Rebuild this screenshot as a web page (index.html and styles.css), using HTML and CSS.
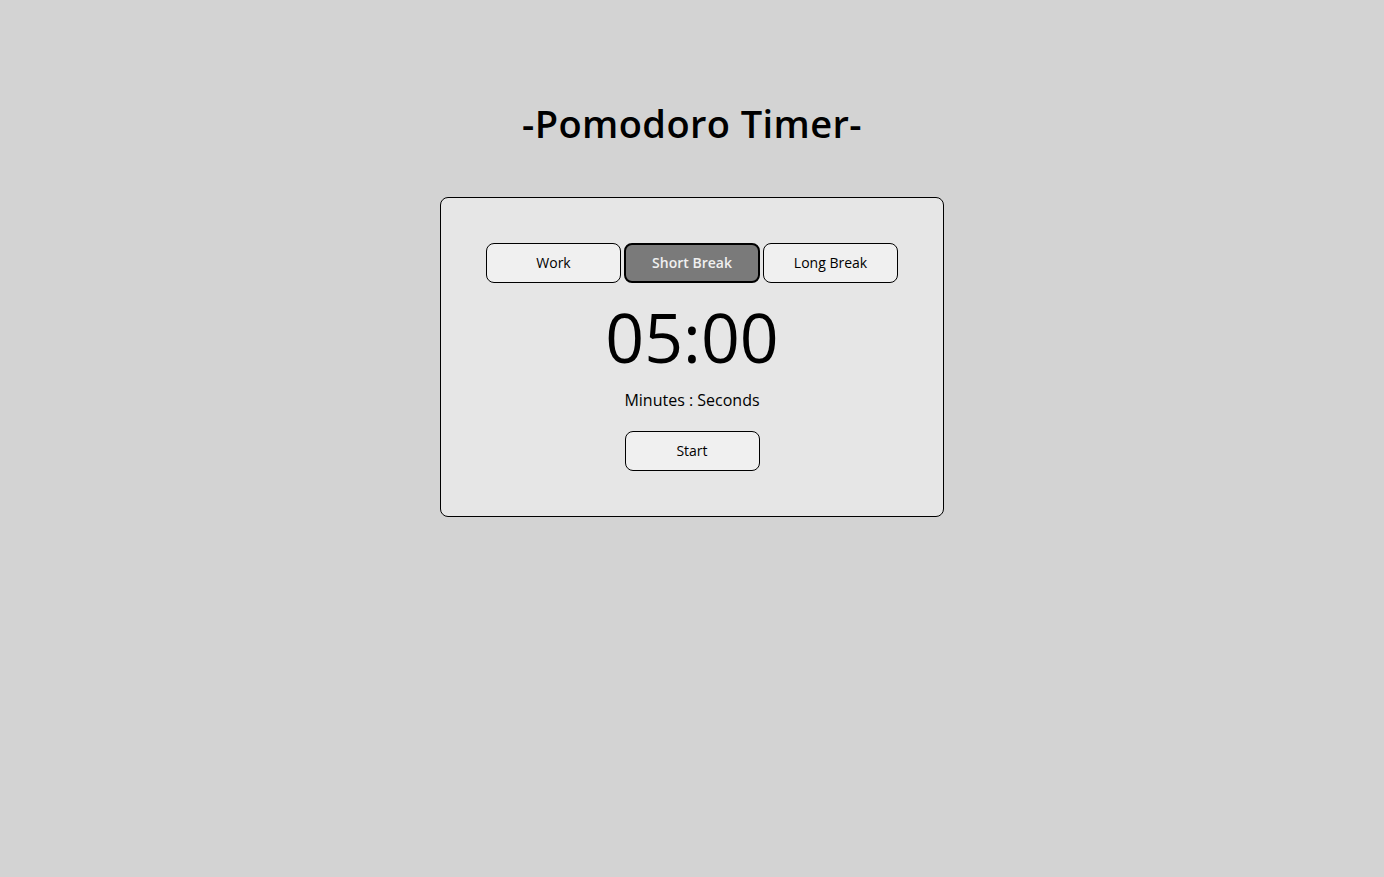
FILE: index.html
```html
<!DOCTYPE html>
<html lang="en">
<head>
  <meta charset="UTF-8" />
  <meta name="viewport" content="width=device-width, initial-scale=1.0"/>
  <title>Pomodoro Timer</title>
  <link rel="stylesheet" href="styles.css">
</head>
<body>

  <h1 class="title">-Pomodoro Timer-</h1>

  <main class="timer-card">
    <div class="modes">
      <button class="mode-btn">Work</button>
      <button class="mode-btn active">Short Break</button>
      <button class="mode-btn">Long Break</button>
    </div>

    <div class="time">05:00</div>
    <p class="time-label">Minutes : Seconds</p>

    <button class="start-btn">Start</button>
  </main>

</body>
</html>
```

FILE: styles.css
```css
* { box-sizing: border-box; margin: 0; padding: 0; font-family: "Open Sans", "Noto Sans", sans-serif; }
body {
  background-color: #d3d3d3;
  color: #000;
  display: flex;
  flex-direction: column;
  align-items: center;
  min-height: 100vh;
}

.title {
  margin-top: 97px;
  font-size: 38px;
  font-weight: 600;
  line-height: 52px;
  letter-spacing: 0.4px;
}

.timer-card {
  margin-top: 48px;
  width: 504px;
  background-color: #e6e6e6;
  border: 1px solid #000;
  border-radius: 8px;
  padding: 45px 0;
  display: flex;
  flex-direction: column;
  align-items: center;
}

.modes {
  display: flex;
  gap: 3px;
}

button {
  width: 135px;
  height: 40px;
  padding-bottom: 2px;
  background-color: #f0f0f0;
  border: 1px solid #000;
  border-radius: 8px;
  font-size: 14px;
  color: #000;
  cursor: pointer;
}
.mode-btn.active {
  width: 136px;
  background-color: #7a7a7a;
  border: 2px solid #000;
  color: #f0f0f0;
  font-weight: 600;
}

.time {
  margin-top: 18px;
  font-size: 68px;
  line-height: 72px;
  font-weight: 500;
}

.time-label {
  margin-top: 17px;
  font-size: 16px;
  line-height: 20px;
}

.start-btn {
  margin-top: 21px;
}
```
